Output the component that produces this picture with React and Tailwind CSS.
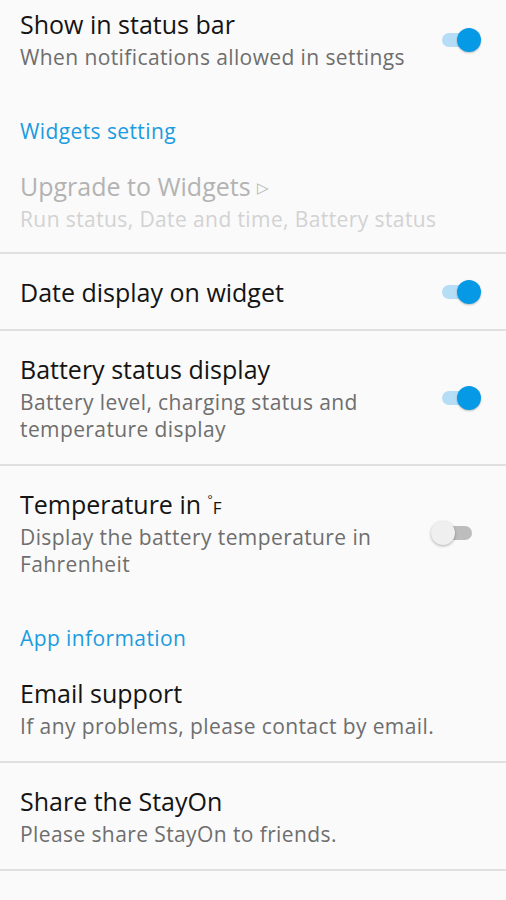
import React from "react";

const Toggle = ({ on }) => (
  <div className="relative w-[52px] h-[26px] shrink-0">
    <div
      className={`absolute left-[12px] top-[6px] w-[30px] h-[14px] rounded-full ${
        on ? "bg-[#b5ddf6]" : "bg-[#bdbdbd]"
      }`}
    />
    <div
      className={`absolute top-[1px] w-[24px] h-[24px] rounded-full ${
        on
          ? "left-[27px] bg-[#069ae6] shadow-[0_1px_2px_rgba(0,0,0,0.25)]"
          : "left-[1px] bg-[#efefef] shadow-[0_1px_3px_rgba(0,0,0,0.3)]"
      }`}
    />
  </div>
);

const Item = ({ title, sub, toggle, disabled, divider, first }) => (
  <div
    className={`flex items-center pl-5 pr-6 ${first ? "pt-2" : "pt-[22px]"} ${
      disabled ? "pb-[19px]" : "pb-[21px]"
    } ${divider ? "border-b-2 border-[#e0e0e0]" : ""}`}
  >
    <div className="flex-1 pr-4">
      <div
        className={`h-[32px] text-[25px] leading-[32px] ${
          disabled ? "text-[#b3b3b3]" : "text-[#141414]"
        }`}
      >
        {title}
      </div>
      {sub && (
        <div
          className={`mt-1 text-[21px] leading-[27px] tracking-[0.4px] ${
            disabled ? "text-[#d2d2d2]" : "text-[#6e6e6e]"
          }`}
        >
          {sub}
        </div>
      )}
    </div>
    {toggle !== undefined && <Toggle on={toggle} />}
  </div>
);

const Header = ({ children }) => (
  <div className="pl-5 pt-[25px] pb-[3px] text-[21px] leading-[28px] tracking-[0.4px] text-[#1b9ce0]">
    {children}
  </div>
);

export default function App() {
  return (
    <div
      className="w-[506px] h-[900px] overflow-hidden bg-[#fafafa]"
      style={{ fontFamily: "'Open Sans', sans-serif" }}
    >
      <Item
        first
        title="Show in status bar"
        sub="When notifications allowed in settings"
        toggle={true}
      />
      <Header>Widgets setting</Header>
      <Item
        disabled
        divider
        title={
          <span>
            Upgrade to Widgets{" "}
            <span className="text-[15px] leading-none relative top-[-3px]">▷</span>
          </span>
        }
        sub="Run status, Date and time, Battery status"
      />
      <Item divider title="Date display on widget" toggle={true} />
      <Item
        divider
        title="Battery status display"
        sub="Battery level, charging status and temperature display"
        toggle={true}
      />
      <Item
        title={
          <span>
            Temperature in{" "}
            <span className="text-[12px] leading-none relative top-[-10px]">°</span>
            <span className="text-[17px] leading-none">F</span>
          </span>
        }
        sub="Display the battery temperature in Fahrenheit"
        toggle={false}
      />
      <Header>App information</Header>
      <Item
        divider
        title="Email support"
        sub="If any problems, please contact by email."
      />
      <Item
        divider
        title="Share the StayOn"
        sub="Please share StayOn to friends."
      />
    </div>
  );
}
